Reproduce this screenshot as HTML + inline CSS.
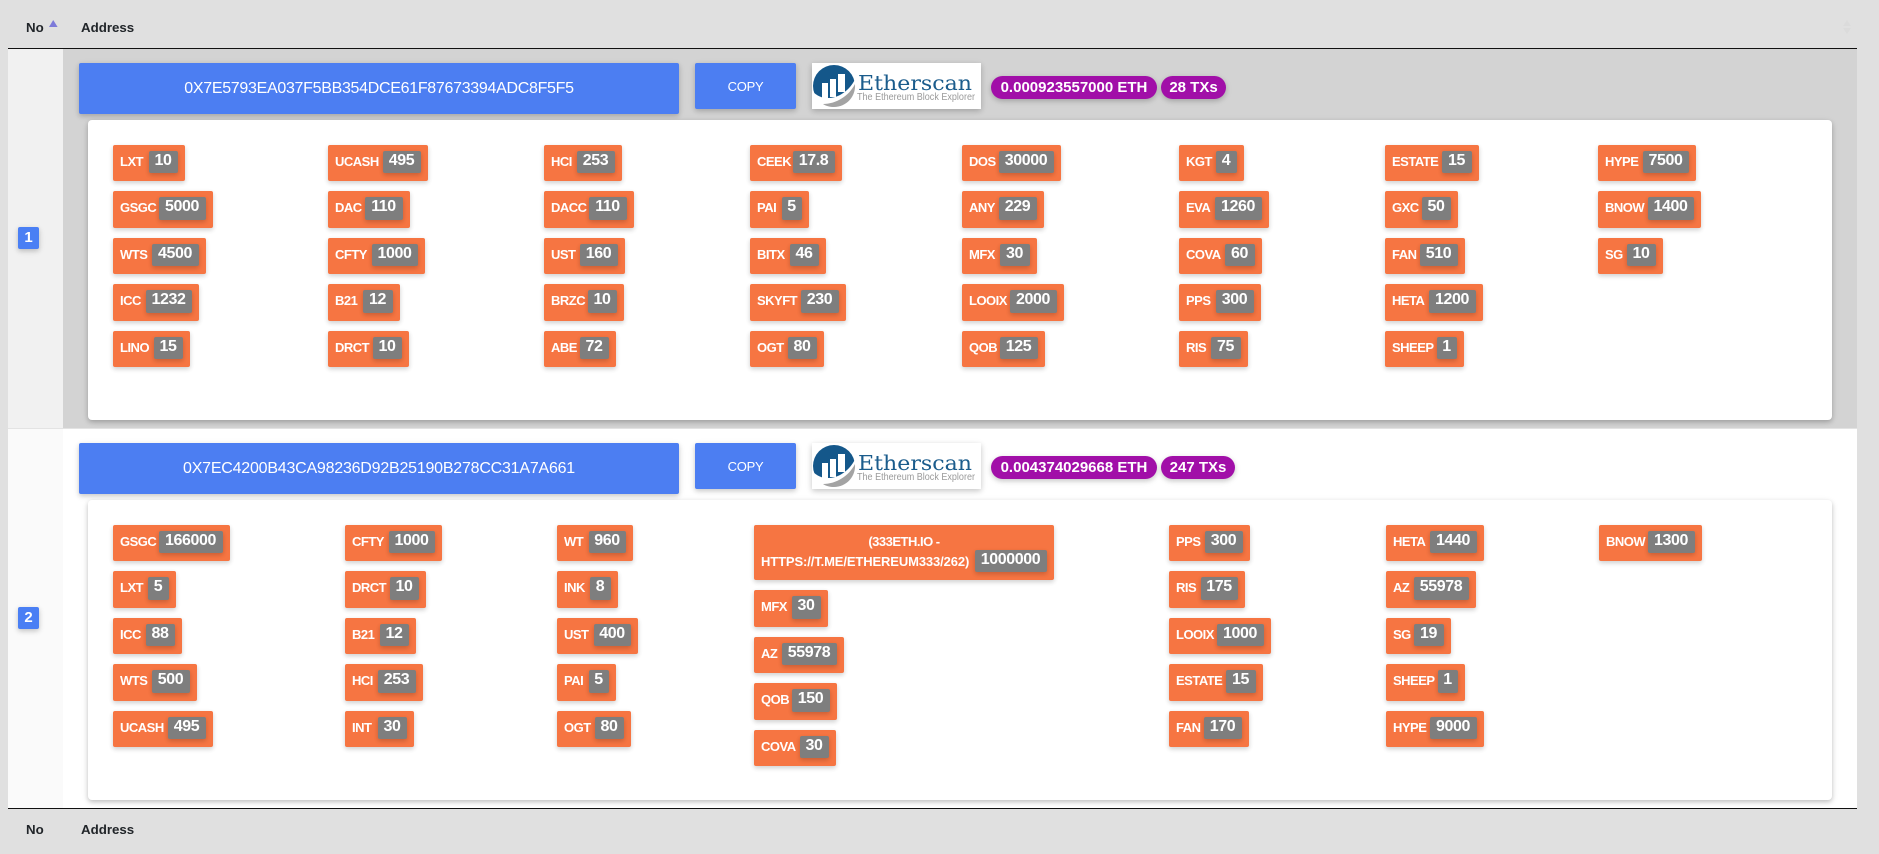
<!DOCTYPE html>
<html lang="en">
<head>
<meta charset="utf-8">
<title>Address table</title>
<style>
html,body{margin:0;padding:0;width:1879px;height:854px;overflow:hidden;background:#e0e0e0;font-family:"Liberation Sans",sans-serif}
#p{position:relative;width:1879px;height:854px;overflow:hidden}
.x{position:absolute}
.th{position:absolute;font-weight:700;font-size:13.3px;line-height:16px;color:#212529;white-space:nowrap}
.num{position:absolute;left:18px;width:21px;height:22px;background:#4a7ff4;border-radius:2px;color:#fff;font-weight:700;font-size:15px;line-height:22px;text-align:center;box-shadow:0 2px 5px rgba(0,0,0,.16),0 2px 8px rgba(0,0,0,.08)}
.addr{position:absolute;left:79px;width:600px;height:51px;background:#4c7ef2;border-radius:2px;color:#fff;font-size:16px;letter-spacing:-.3px;line-height:51px;text-align:center;white-space:nowrap;box-shadow:0 2px 5px rgba(0,0,0,.16),0 2px 8px rgba(0,0,0,.08)}
.copy{position:absolute;left:695px;width:101px;height:46px;background:#4c7ef2;border-radius:2px;color:#fff;font-size:13px;letter-spacing:-.3px;line-height:47px;text-align:center;box-shadow:0 2px 5px rgba(0,0,0,.16),0 2px 8px rgba(0,0,0,.08)}
.logo{position:absolute;left:812px;width:169px;height:46px;background:#fff;box-shadow:0 2px 5px rgba(0,0,0,.16),0 2px 8px rgba(0,0,0,.08)}
.pill{position:absolute;height:23px;background:#a10fa8;border-radius:12px;color:#fff;font-weight:700;font-size:15px;line-height:23px;text-align:center;white-space:nowrap;box-shadow:0 2px 5px rgba(0,0,0,.16),0 2px 8px rgba(0,0,0,.08)}
.card{position:absolute;left:88px;width:1744px;height:300px;background:#fff;border-radius:4px;box-shadow:0 2px 5px rgba(0,0,0,.2),0 2px 8px rgba(0,0,0,.08)}
.c{position:absolute;height:36px;background:#f67542;border-radius:2px;color:#fff;font-weight:700;font-size:13px;letter-spacing:-.5px;line-height:34px;padding-left:7px;box-sizing:border-box;white-space:nowrap;box-shadow:0 2px 5px rgba(0,0,0,.14),0 2px 6px rgba(0,0,0,.06)}
.c b{position:absolute;right:7.5px;top:6px;bottom:8px;background:#7e7e7e;border-radius:2px;font-size:16px;letter-spacing:-.4px;line-height:20px;text-align:center;box-shadow:0 2px 5px rgba(0,0,0,.14),0 2px 6px rgba(0,0,0,.06)}
.a{top:145px}.bb{top:191px;height:37px}.cc{top:238px}.d{top:284px;height:37px}.e{top:331px}
.f{top:525px}.g{top:571px;height:37px}.h{top:618px}.i{top:664px;height:37px}.j{top:711px}
</style>
</head>
<body>
<div id="p">
<div class="x" style="left:8px;top:48px;width:1849px;height:1px;background:#111"></div>
<div class="x" style="left:8px;top:49px;width:55px;height:379px;background:#f1f1f1"></div>
<div class="x" style="left:63px;top:49px;width:1794px;height:379px;background:#d3d3d3"></div>
<div class="x" style="left:8px;top:428px;width:1849px;height:1px;background:#e3e3e3"></div>
<div class="x" style="left:8px;top:429px;width:55px;height:379px;background:#fafafa"></div>
<div class="x" style="left:63px;top:429px;width:1794px;height:379px;background:#fff"></div>
<div class="x" style="left:8px;top:808px;width:1849px;height:1px;background:#111"></div>

<div class="th" style="left:26px;top:20px">No</div>
<div class="th" style="left:81px;top:20px">Address</div>
<svg class="x" style="left:48px;top:19px" width="11" height="9"><path d="M1 8 5.2 1 9.6 8Z" fill="#7d7ad9"/></svg>
<svg class="x" style="left:1842px;top:19px" width="10" height="17"><path d="M1 7 5 1 9 7ZM1 9 9 9 5 15Z" fill="#dbdbdb"/></svg>
<div class="th" style="left:26px;top:822px">No</div>
<div class="th" style="left:81px;top:822px">Address</div>

<div class="num" style="top:227px">1</div>
<div class="num" style="top:607px">2</div>

<div class="addr" style="top:63px">0X7E5793EA037F5BB354DCE61F87673394ADC8F5F5</div>
<div class="copy" style="top:63px">COPY</div>
<div class="logo" style="top:63px">
<svg width="169" height="46" style="display:block">
<circle cx="22" cy="23" r="21" fill="#14578a"/>
<path d="M1 29C8 35 12 35 17 35C28 35 40 25 44 14L46 46H1Z" fill="#fff"/>
<path d="M11 41C24 41 37 33 43 21C44 34 34 44 22 44C18 44 14 43 11 41Z" fill="#a3a3a3"/>
<path d="M10 20H16V35H10ZM18 16H24V34H18ZM26 11H33V29H26Z" fill="#fff"/>
<text x="46" y="27" font-family="'DejaVu Serif',serif" font-size="20.5" fill="#1b5c8c" textLength="114" lengthAdjust="spacingAndGlyphs">Etherscan</text>
<text x="45" y="37" font-family="'Liberation Sans',sans-serif" font-size="10" fill="#9a9a9a" textLength="118" lengthAdjust="spacingAndGlyphs">The Ethereum Block Explorer</text>
</svg>
</div>
<div class="pill" style="left:991px;top:76px;width:166px">0.000923557000 ETH</div>
<div class="pill" style="left:1161px;top:76px;width:65px">28 TXs</div>

<div class="card" style="top:120px"></div>

<div class="c a" style="left:113px;width:72px">LXT<b style="width:29px">10</b></div>
<div class="c bb" style="left:113px;width:100px">GSGC<b style="width:47px">5000</b></div>
<div class="c cc" style="left:113px;width:93px">WTS<b style="width:47px">4500</b></div>
<div class="c d" style="left:113px;width:86px">ICC<b style="width:46px">1232</b></div>
<div class="c e" style="left:113px;width:77px">LINO<b style="width:29px">15</b></div>

<div class="c a" style="left:328px;width:100px">UCASH<b style="width:38px">495</b></div>
<div class="c bb" style="left:328px;width:82px">DAC<b style="width:38px">110</b></div>
<div class="c cc" style="left:328px;width:97px">CFTY<b style="width:46px">1000</b></div>
<div class="c d" style="left:328px;width:72px">B21<b style="width:30px">12</b></div>
<div class="c e" style="left:328px;width:81px">DRCT<b style="width:29px">10</b></div>

<div class="c a" style="left:544px;width:78px">HCI<b style="width:38px">253</b></div>
<div class="c bb" style="left:544px;width:90px">DACC<b style="width:38px">110</b></div>
<div class="c cc" style="left:544px;width:81px">UST<b style="width:38px">160</b></div>
<div class="c d" style="left:544px;width:80px">BRZC<b style="width:29px">10</b></div>
<div class="c e" style="left:544px;width:72px">ABE<b style="width:29px">72</b></div>

<div class="c a" style="left:750px;width:92px">CEEK<b style="width:42px">17.8</b></div>
<div class="c bb" style="left:750px;width:59px">PAI<b style="width:20px">5</b></div>
<div class="c cc" style="left:750px;width:76px">BITX<b style="width:29px">46</b></div>
<div class="c d" style="left:750px;width:96px">SKYFT<b style="width:38px">230</b></div>
<div class="c e" style="left:750px;width:74px">OGT<b style="width:29px">80</b></div>

<div class="c a" style="left:962px;width:99px">DOS<b style="width:55px">30000</b></div>
<div class="c bb" style="left:962px;width:82px">ANY<b style="width:38px">229</b></div>
<div class="c cc" style="left:962px;width:75px">MFX<b style="width:30px">30</b></div>
<div class="c d" style="left:962px;width:102px">LOOIX<b style="width:47px">2000</b></div>
<div class="c e" style="left:962px;width:83px">QOB<b style="width:38px">125</b></div>

<div class="c a" style="left:1179px;width:65px">KGT<b style="width:21px">4</b></div>
<div class="c bb" style="left:1179px;width:90px">EVA<b style="width:47px">1260</b></div>
<div class="c cc" style="left:1179px;width:83px">COVA<b style="width:30px">60</b></div>
<div class="c d" style="left:1179px;width:82px">PPS<b style="width:38px">300</b></div>
<div class="c e" style="left:1179px;width:69px">RIS<b style="width:30px">75</b></div>

<div class="c a" style="left:1385px;width:94px">ESTATE<b style="width:30px">15</b></div>
<div class="c bb" style="left:1385px;width:73px">GXC<b style="width:29px">50</b></div>
<div class="c cc" style="left:1385px;width:80px">FAN<b style="width:38px">510</b></div>
<div class="c d" style="left:1385px;width:98px">HETA<b style="width:47px">1200</b></div>
<div class="c e" style="left:1385px;width:79px">SHEEP<b style="width:20px">1</b></div>

<div class="c a" style="left:1598px;width:98px">HYPE<b style="width:46px">7500</b></div>
<div class="c bb" style="left:1598px;width:103px">BNOW<b style="width:46px">1400</b></div>
<div class="c cc" style="left:1598px;width:65px">SG<b style="width:29px">10</b></div>

<div class="addr" style="top:443px;letter-spacing:-.22px">0X7EC4200B43CA98236D92B25190B278CC31A7A661</div>
<div class="copy" style="top:443px">COPY</div>
<div class="logo" style="top:443px">
<svg width="169" height="46" style="display:block">
<circle cx="22" cy="23" r="21" fill="#14578a"/>
<path d="M1 29C8 35 12 35 17 35C28 35 40 25 44 14L46 46H1Z" fill="#fff"/>
<path d="M11 41C24 41 37 33 43 21C44 34 34 44 22 44C18 44 14 43 11 41Z" fill="#a3a3a3"/>
<path d="M10 20H16V35H10ZM18 16H24V34H18ZM26 11H33V29H26Z" fill="#fff"/>
<text x="46" y="27" font-family="'DejaVu Serif',serif" font-size="20.5" fill="#1b5c8c" textLength="114" lengthAdjust="spacingAndGlyphs">Etherscan</text>
<text x="45" y="37" font-family="'Liberation Sans',sans-serif" font-size="10" fill="#9a9a9a" textLength="118" lengthAdjust="spacingAndGlyphs">The Ethereum Block Explorer</text>
</svg>
</div>
<div class="pill" style="left:991px;top:456px;width:166px">0.004374029668 ETH</div>
<div class="pill" style="left:1161px;top:456px;width:74px">247 TXs</div>

<div class="card" style="top:500px"></div>

<div class="c f" style="left:113px;width:117px">GSGC<b style="width:64px">166000</b></div>
<div class="c g" style="left:113px;width:63px">LXT<b style="width:21px">5</b></div>
<div class="c h" style="left:113px;width:69px">ICC<b style="width:29px">88</b></div>
<div class="c i" style="left:113px;width:84px">WTS<b style="width:38px">500</b></div>
<div class="c j" style="left:113px;width:100px">UCASH<b style="width:38px">495</b></div>

<div class="c f" style="left:345px;width:97px">CFTY<b style="width:46px">1000</b></div>
<div class="c g" style="left:345px;width:81px">DRCT<b style="width:29px">10</b></div>
<div class="c h" style="left:345px;width:71px">B21<b style="width:29px">12</b></div>
<div class="c i" style="left:345px;width:78px">HCI<b style="width:38px">253</b></div>
<div class="c j" style="left:345px;width:69px">INT<b style="width:29px">30</b></div>

<div class="c f" style="left:557px;width:76px">WT<b style="width:37px">960</b></div>
<div class="c g" style="left:557px;width:61px">INK<b style="width:21px">8</b></div>
<div class="c h" style="left:557px;width:81px">UST<b style="width:37px">400</b></div>
<div class="c i" style="left:557px;width:59px">PAI<b style="width:20px">5</b></div>
<div class="c j" style="left:557px;width:74px">OGT<b style="width:29px">80</b></div>

<div class="c" style="left:754px;top:525px;width:300px;height:55px;padding:0"><span class="x" style="left:0;top:0;width:300px;text-align:center;line-height:34px">(333ETH.IO -</span><span class="x" style="left:7px;top:20px;line-height:34px;letter-spacing:-.12px">HTTPS://T.ME/ETHEREUM333/262)</span><b style="width:72px;top:25px;bottom:8px">1000000</b></div>
<div class="c" style="left:754px;top:590px;width:74px;height:37px">MFX<b style="width:29px">30</b></div>
<div class="c" style="left:754px;top:637px;width:90px">AZ<b style="width:55px">55978</b></div>
<div class="c" style="left:754px;top:683px;width:83px;height:37px">QOB<b style="width:38px">150</b></div>
<div class="c" style="left:754px;top:730px;width:82px">COVA<b style="width:29px">30</b></div>

<div class="c f" style="left:1169px;width:81px">PPS<b style="width:38px">300</b></div>
<div class="c g" style="left:1169px;width:76px">RIS<b style="width:37px">175</b></div>
<div class="c h" style="left:1169px;width:102px">LOOIX<b style="width:47px">1000</b></div>
<div class="c i" style="left:1169px;width:94px">ESTATE<b style="width:30px">15</b></div>
<div class="c j" style="left:1169px;width:80px">FAN<b style="width:38px">170</b></div>

<div class="c f" style="left:1386px;width:98px">HETA<b style="width:47px">1440</b></div>
<div class="c g" style="left:1386px;width:90px">AZ<b style="width:55px">55978</b></div>
<div class="c h" style="left:1386px;width:65px">SG<b style="width:30px">19</b></div>
<div class="c i" style="left:1386px;width:79px">SHEEP<b style="width:20px">1</b></div>
<div class="c j" style="left:1386px;width:98px">HYPE<b style="width:47px">9000</b></div>

<div class="c f" style="left:1599px;width:103px">BNOW<b style="width:47px">1300</b></div>
</div>
</body>
</html>
